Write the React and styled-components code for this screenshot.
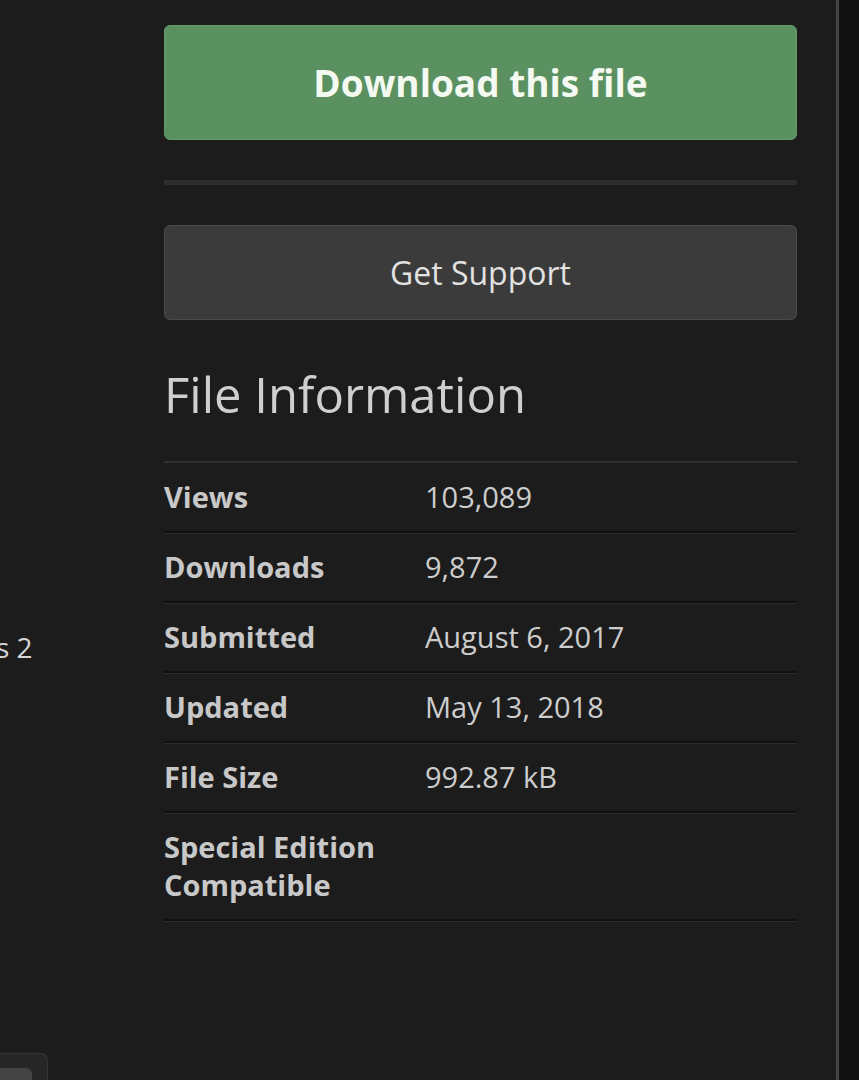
import React from 'react';
import styled, { createGlobalStyle } from 'styled-components';

const GlobalStyle = createGlobalStyle`
  html, body { margin: 0; padding: 0; background: #1c1c1c; }
  body { font-family: "Open Sans", "Noto Sans", sans-serif; }
`;

const Page = styled.div`
  display: flex;
  height: 1080px;
  overflow: hidden;
  background: #1c1c1c;
`;

const Sidebar = styled.div`
  width: 164px;
  flex-shrink: 0;
  display: flex;
  flex-direction: column;
  overflow: hidden;
`;

const SideText = styled.div`
  margin-top: 627px;
  margin-left: -4px;
  font-size: 28px;
  line-height: 40px;
  color: #d6d6d6;
`;

const SideCard = styled.div`
  margin-top: auto;
  width: 56px;
  height: 27px;
  margin-left: -8px;
  padding: 15px 0 0 8px;
  box-sizing: border-box;
  background: #262626;
  border-top-right-radius: 7px;
  box-shadow: inset -1px 1px 0 #333;
`;

const SideCardInner = styled.div`
  height: 12px;
  width: 32px;
  background: #444;
  border-top-right-radius: 6px;
`;

const Main = styled.div`
  width: 633px;
  flex-shrink: 0;
  padding-top: 25px;
  display: flex;
  flex-direction: column;
`;

const Button = styled.div`
  display: flex;
  align-items: center;
  justify-content: center;
  box-sizing: border-box;
  border-radius: 6px;
  height: ${p => (p.$primary ? '115px' : '95px')};
  background: ${p => (p.$primary ? '#5b9160' : '#3b3b3b')};
  border: 1px solid ${p => (p.$primary ? '#639a68' : '#4a4a4a')};
  color: ${p => (p.$primary ? '#f4f9f1' : '#e2e2e2')};
  font-size: ${p => (p.$primary ? '37px' : '32px')};
  font-weight: ${p => (p.$primary ? 700 : 400)};
`;

const Separator = styled.div`
  height: 5px;
  background: #2d2d2d;
  margin: 40px 0 40px;
  border-radius: 1px;
`;

const Heading = styled.h2`
  margin: 42px 0 35px;
  font-size: 49px;
  font-weight: 400;
  line-height: 64px;
  color: #cfcfcf;
`;

const InfoTable = styled.div`
  border-top: 2px solid #313131;
`;

const Row = styled.div`
  display: grid;
  grid-template-columns: 261px 1fr;
  padding: 15px 0;
  border-bottom: 2px solid #101010;
  box-shadow: 0 1px 0 #2c2c2c;
  font-size: 29px;
  line-height: 38px;
`;

const Label = styled.div`
  font-weight: 700;
  color: #c8c8c8;
`;

const Value = styled.div`
  color: #cdcdcd;
`;

const Gutter = styled.div`
  width: 39px;
  flex-shrink: 0;
`;

const Divider = styled.div`
  width: 3px;
  flex-shrink: 0;
  background: #444;
`;

const RightPanel = styled.div`
  flex: 1;
  background: #121212;
`;

const info = [
  ['Views', '103,089'],
  ['Downloads', '9,872'],
  ['Submitted', 'August 6, 2017'],
  ['Updated', 'May 13, 2018'],
  ['File Size', '992.87 kB'],
  [<>Special Edition<br />Compatible</>, ''],
];

export default function App() {
  return (
    <>
      <GlobalStyle />
      <Page>
        <Sidebar>
          <SideText>s 2</SideText>
          <SideCard>
            <SideCardInner />
          </SideCard>
        </Sidebar>
        <Main>
          <Button $primary>Download this file</Button>
          <Separator />
          <Button>Get Support</Button>
          <Heading>File Information</Heading>
          <InfoTable>
            {info.map(([label, value], i) => (
              <Row key={i}>
                <Label>{label}</Label>
                <Value>{value}</Value>
              </Row>
            ))}
          </InfoTable>
        </Main>
        <Gutter />
        <Divider />
        <RightPanel />
      </Page>
    </>
  );
}
